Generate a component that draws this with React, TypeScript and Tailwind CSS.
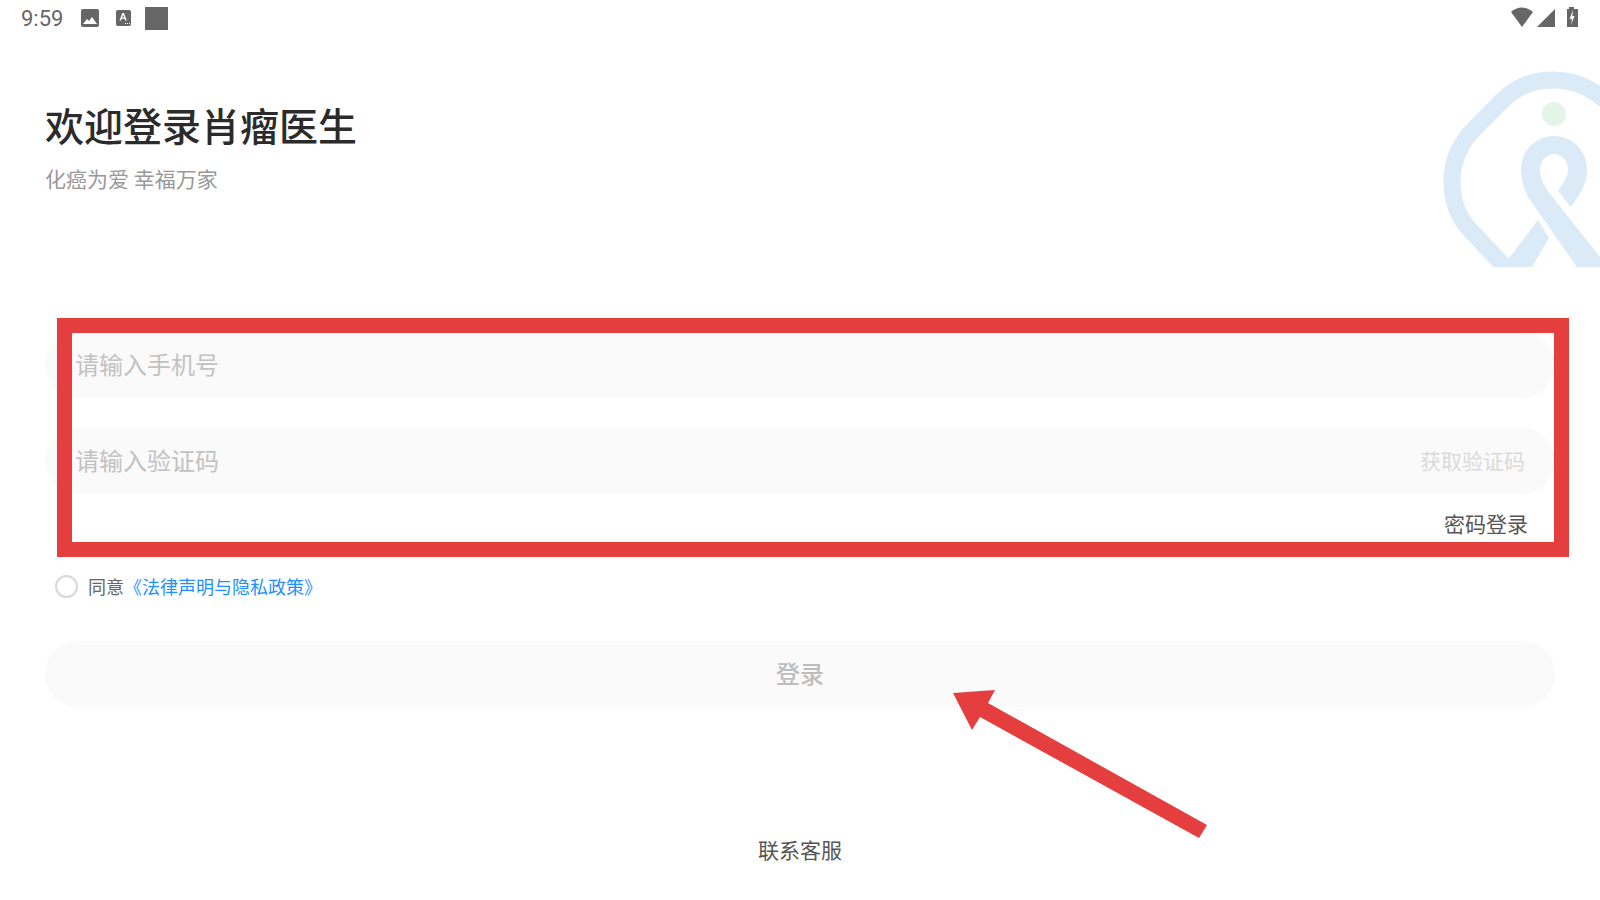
const FONT = "font-['Noto_Sans_CJK_SC','Noto_Sans',sans-serif]";

function StatusBar() {
  return (
    <div className="flex h-[36px] items-center justify-between pl-[21px] pr-[20px]">
      <div className="flex items-center">
        <span className="mt-[1px] w-[60px] font-['Roboto',sans-serif] text-[22px] leading-none text-[#666666]">9:59</span>
        <svg className="h-[18px] w-[18px]" viewBox="0 0 18 18">
          <rect width="18" height="18" rx="2" fill="#666666" />
          <path d="M2 15 L6 10 L8 12 L11 8 L16 15 Z" fill="#ffffff" />
        </svg>
        <svg className="ml-[17px] h-[16px] w-[15px]" viewBox="0 0 15 16">
          <rect width="15" height="16" rx="2" fill="#666666" />
          <path d="M3.5 10.5 L6.3 3 H8 L10.8 10.5 H9.2 L8.6 8.8 H5.6 L5 10.5 Z M6.1 7.5 H8.1 L7.1 4.8 Z" fill="#ffffff" />
          <path d="M9 13h1v1H9zM11 13h1v1h-1zM13 13h1v1h-1z" fill="#ffffff" />
        </svg>
        <div className="ml-[14px] h-[23px] w-[23px] bg-[#666666]" />
      </div>
      <svg className="h-[22px] w-[70px]" viewBox="0 0 70 22">
        <path d="M1 5 C7 -1 17 -1 23 5 L12 20 Z" fill="#666666" />
        <path d="M27 20 L45 2 V20 Z" fill="#666666" />
        <path d="M57 2 H59 V0 H64 V2 H68 V20 H57 Z" fill="#666666" />
        <path d="M63 3 L59.5 12 H62 L61 18 L64.5 9 H62.3 Z" fill="#ffffff" />
      </svg>
    </div>
  );
}

function Logo() {
  return (
    <svg className="absolute left-[1400px] top-0 h-[267px] w-[200px]" viewBox="0 0 200 267">
      <path
        d="M105 267 L72 232 C58 218 52 202 52 182 C52 162 60 143 75 128 L105 98 C118 86 135 80 153 80 C175 80 190 88 205 100"
        fill="none"
        stroke="#daebf7"
        strokeWidth="17"
      />
      {/* ribbon */}
      <path
        d="M177 267 L128 197 C124 188 121 180 121 170 C121 150 136 136 154 136 C172 136 187 150 187 170 C187 185 178 197 171 207 L158 191 C164 182 168 176 168 170 C168 161 162 154 154 154 C146 154 140 161 140 170 C140 177 144 184 147 190 L200 257 L210 267 Z"
        fill="#daebf7"
      />
      <path d="M138 220 L149 238 L132 267 L100 267 L110 257 Z" fill="#daebf7" />
      <circle cx="154" cy="114" r="12" fill="#e4f4e8" />
    </svg>
  );
}

function Field({ placeholder, action }: { placeholder: string; action?: string }) {
  return (
    <div className="flex h-[66px] items-center justify-between rounded-full bg-[#fafafa] px-[30px] pb-[2px]">
      <span className="text-[24px] text-[#c2c2c2]">{placeholder}</span>
      {action && <span className="mt-[2px] text-[21px] text-[#dadada]">{action}</span>}
    </div>
  );
}

export default function App() {
  return (
    <div className={`relative h-[900px] w-[1600px] overflow-hidden bg-white ${FONT}`}>
      <StatusBar />
      <Logo />

      <div className="px-[45px]">
        <h1 className="mt-[62px] text-[39px] font-medium leading-[52px] text-[#2b2b2b]">欢迎登录肖瘤医生</h1>
        <p className="mt-[13px] text-[21px] leading-[30px] text-[#999999]">化癌为爱 幸福万家</p>

        <div className="mt-[139px] flex flex-col gap-[30px]">
          <Field placeholder="请输入手机号" />
          <Field placeholder="请输入验证码" action="获取验证码" />
        </div>

        <div className="mt-[13px] flex justify-end pr-[27px] text-[21px] leading-[32px] text-[#555555]">密码登录</div>

        <div className="mt-[34px] flex items-center pl-[10px]">
          <span className="h-[23px] w-[23px] rounded-full border-2 border-[#d8d8d8]" />
          <span className="ml-[10px] text-[18px] text-[#666666]">同意</span>
          <span className="text-[18px] text-[#1e90ff]">《法律声明与隐私政策》</span>
        </div>

        <div className="mt-[41px] flex h-[66px] items-center justify-center rounded-full bg-[#fafafa] pb-[2px] text-[24px] font-medium text-[#bdbdbd]">
          登录
        </div>

        <div className="mt-[126px] text-center text-[21px] leading-[32px] text-[#555555]">联系客服</div>
      </div>

      {/* annotation overlay */}
      <div className="absolute left-[57px] top-[318px] h-[239px] w-[1512px] border-[15px] border-[#e53e3e]" />
      <svg className="absolute left-0 top-0 h-[900px] w-[1600px]" viewBox="0 0 1600 900">
        <path d="M953 693 L995 690 L988 703 L1207 825 L1199 838 L980 717 L972 730 Z" fill="#e53e3e" />
      </svg>
    </div>
  );
}
